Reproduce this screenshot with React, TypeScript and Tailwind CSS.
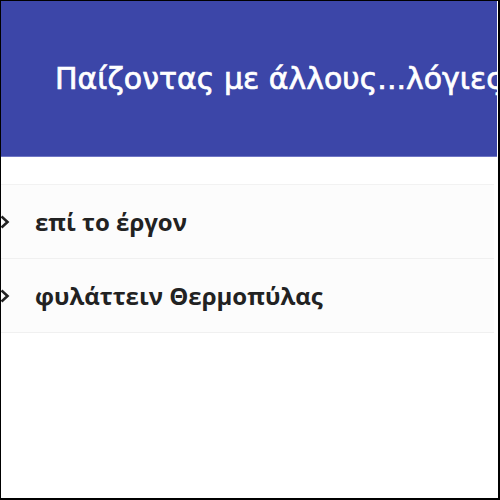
import React from "react";

const items = ["επί το έργον", "φυλάττειν Θερμοπύλας"];

export default function App() {
  return (
    <div className="w-[500px] h-[500px] bg-black pt-px pl-px pr-[2px] pb-[2px] overflow-hidden">
      <div className="w-full h-full bg-white flex flex-col overflow-hidden">
        <div className="h-[156px] shrink-0 mr-px bg-[#3c46a8] border-b border-[#6f76c4] flex items-center pl-[54px] whitespace-nowrap overflow-hidden">
          <span className="text-white text-[30px] leading-none [-webkit-text-stroke:0.7px_white]" style={{ fontFamily: '"DejaVu Sans", Verdana, sans-serif' }}>
            Παίζοντας με άλλους...λόγιες
          </span>
        </div>
        <div className="mt-[27px] mr-[4px] flex flex-col border-t border-[#f2f2f2]">
          {items.map((t) => (
            <div key={t} className="h-[74px] flex items-center bg-[#fcfcfc] border-b border-[#f0f0f0]">
              <svg width="10" height="14" viewBox="0 0 10 14" className="ml-[-1px] shrink-0">
                <path d="M1.5 1.5 L7.5 7 L1.5 12.5" fill="none" stroke="#222" strokeWidth="2.6" />
              </svg>
              <span className="ml-[25px] text-[24px] font-bold text-[#222]" style={{ fontFamily: '"Open Sans", "Noto Sans", sans-serif' }}>
                {t}
              </span>
            </div>
          ))}
        </div>
      </div>
    </div>
  );
}
